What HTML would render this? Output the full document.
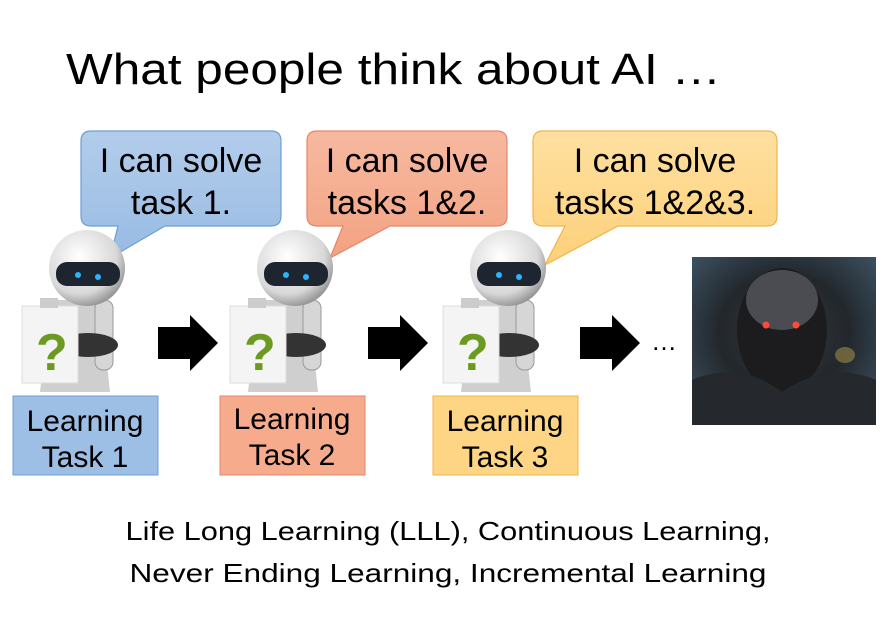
<!DOCTYPE html>
<html><head><meta charset="utf-8"><style>
html,body{margin:0;padding:0;background:#fff;width:884px;height:620px;overflow:hidden}
svg{display:block}
text{font-family:"Liberation Sans",sans-serif;fill:#000}
</style></head><body>
<svg width="884" height="620" viewBox="0 0 884 620">
<defs>
<linearGradient id="b1" x1="0" y1="0" x2="0" y2="1"><stop offset="0" stop-color="#b3cdeb"/><stop offset="1" stop-color="#98bbe3"/></linearGradient>
<linearGradient id="b2" x1="0" y1="0" x2="0" y2="1"><stop offset="0" stop-color="#f7b9a0"/><stop offset="1" stop-color="#f3a282"/></linearGradient>
<linearGradient id="b3" x1="0" y1="0" x2="0" y2="1"><stop offset="0" stop-color="#fee0a0"/><stop offset="1" stop-color="#fdd07a"/></linearGradient>
<radialGradient id="hd" cx="0.4" cy="0.35" r="0.7"><stop offset="0" stop-color="#ffffff"/><stop offset="0.7" stop-color="#d8d8d8"/><stop offset="1" stop-color="#8a8a8a"/></radialGradient>
<radialGradient id="tm" cx="0.5" cy="0.45" r="0.7"><stop offset="0" stop-color="#3a3a3a"/><stop offset="0.5" stop-color="#22272c"/><stop offset="1" stop-color="#3e5566"/></radialGradient>
<g id="robot">
 <path d="M50 300 L40 392 L110 392 L100 300 Z" fill="#cfcfcf"/>
 <rect x="95" y="300" width="18" height="70" rx="8" fill="#d6d6d6" stroke="#999"/>
 <ellipse cx="88" cy="345" rx="30" ry="12" fill="#333"/>
 <circle cx="87" cy="268" r="38" fill="url(#hd)"/>
 <rect x="56" y="262" width="64" height="24" rx="11" fill="#1d2530"/>
 <circle cx="78" cy="275" r="3" fill="#2ab4ff"/>
 <circle cx="98" cy="277" r="3" fill="#2ab4ff"/>
 <rect x="22" y="306" width="56" height="77" fill="#f4f4f4" stroke="#ddd"/>
 <rect x="40" y="298" width="18" height="10" fill="#ccc"/>
 <text x="36" y="370" style="font-size:52px;font-weight:bold;fill:#6a9a1f">?</text>
</g>
<path id="arr" d="M0 12 H32 V0 L60 28 L32 56 V44 H0 Z" fill="#000"/>
</defs>

<text x="66" y="84" style="font-size:44px" textLength="655" lengthAdjust="spacingAndGlyphs">What people think about AI …</text>

<path d="M91 131 H271 Q281 131 281 141 V216 Q281 226 271 226 H165 L110 258 L118 226 H91 Q81 226 81 216 V141 Q81 131 91 131 Z" fill="url(#b1)" stroke="#6c9fd4" stroke-width="1.2"/>
<path d="M317 131 H497 Q507 131 507 141 V216 Q507 226 497 226 H390 L330 258 L343 226 H317 Q307 226 307 216 V141 Q307 131 317 131 Z" fill="url(#b2)" stroke="#e2876a" stroke-width="1.2"/>
<path d="M543 131 H767 Q777 131 777 141 V216 Q777 226 767 226 H618 L545 265 L565 226 H543 Q533 226 533 216 V141 Q533 131 543 131 Z" fill="url(#b3)" stroke="#f0b54a" stroke-width="1.2"/>
<g style="font-size:34px" text-anchor="middle">
<text x="181" y="172">I can solve</text><text x="181" y="214">task 1.</text>
<text x="407" y="172">I can solve</text><text x="407" y="214">tasks 1&amp;2.</text>
<text x="655" y="172">I can solve</text><text x="655" y="214">tasks 1&amp;2&amp;3.</text>
</g>

<use href="#robot"/>
<use href="#robot" x="208"/>
<use href="#robot" x="421"/>

<use href="#arr" x="158" y="315"/>
<use href="#arr" x="368" y="315"/>
<use href="#arr" x="580" y="315"/>
<text x="651" y="350" style="font-size:26px">…</text>

<rect x="692" y="257" width="184" height="168" fill="url(#tm)"/>
<ellipse cx="782" cy="330" rx="45" ry="62" fill="#1c1c1e"/>
<ellipse cx="782" cy="300" rx="36" ry="30" fill="#4a4c51"/>
<circle cx="766" cy="325" r="3.5" fill="#ff4a3a"/>
<circle cx="796" cy="325" r="3.5" fill="#ff4a3a"/>
<path d="M692 380 Q740 360 782 392 Q830 360 876 380 V425 H692 Z" fill="#25282c"/>
<ellipse cx="845" cy="355" rx="10" ry="8" fill="#9a8a4a" opacity="0.6"/>

<rect x="13" y="396" width="145" height="79" fill="#9dbfe5" stroke="#6c9fd4"/>
<rect x="220" y="396" width="145" height="79" fill="#f5ab8c" stroke="#e2876a"/>
<rect x="433" y="396" width="145" height="79" fill="#fdd584" stroke="#f0b54a"/>
<g style="font-size:30px" text-anchor="middle">
<text x="85" y="431">Learning</text><text x="85" y="467">Task 1</text>
<text x="292" y="429">Learning</text><text x="292" y="465">Task 2</text>
<text x="505" y="431">Learning</text><text x="505" y="467">Task 3</text>
</g>

<g style="font-size:26px" text-anchor="middle">
<text x="448" y="540" textLength="645" lengthAdjust="spacingAndGlyphs">Life Long Learning (LLL), Continuous Learning,</text>
<text x="448" y="582" textLength="637" lengthAdjust="spacingAndGlyphs">Never Ending Learning, Incremental Learning</text>
</g>
</svg>
</body></html>
